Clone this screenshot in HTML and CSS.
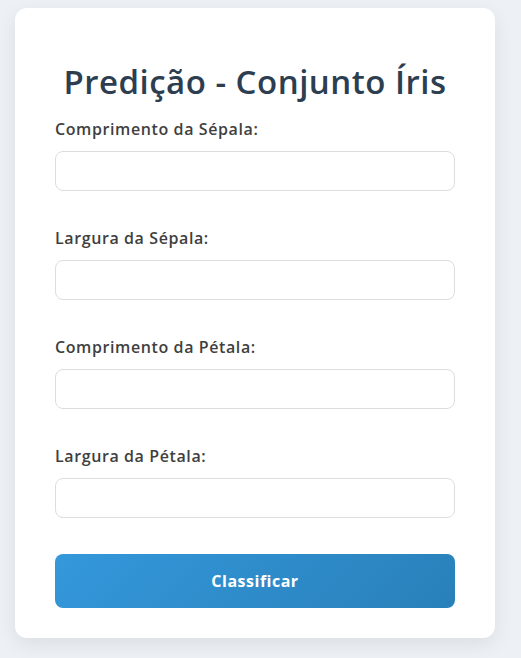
FILE: index.html
```html
<!DOCTYPE html>
<html lang="pt">
<head>
<meta charset="utf-8">
<title>Predição - Conjunto Íris</title>
<link rel="stylesheet" href="styles.css">
</head>
<body>
<div class="card">
  <h1 class="title">Predição - Conjunto Íris</h1>
  <form class="form">
    <div class="group">
      <label class="label" for="sl">Comprimento da Sépala:</label>
      <input class="input" id="sl" type="text">
    </div>
    <div class="group">
      <label class="label" for="sw">Largura da Sépala:</label>
      <input class="input" id="sw" type="text">
    </div>
    <div class="group">
      <label class="label" for="pl">Comprimento da Pétala:</label>
      <input class="input" id="pl" type="text">
    </div>
    <div class="group">
      <label class="label" for="pw">Largura da Pétala:</label>
      <input class="input" id="pw" type="text">
    </div>
    <button class="button" type="button">Classificar</button>
  </form>
</div>
</body>
</html>
```
FILE: styles.css
```css
* { box-sizing: border-box; }
html, body { margin: 0; padding: 0; }
body {
  background: #edf0f5;
  font-family: "Open Sans", "Liberation Sans", sans-serif;
  padding: 8px 0 0 15px;
  min-height: 658px;
}
.card {
  width: 480px;
  background: #ffffff;
  border-radius: 12px;
  box-shadow: 0 6px 20px rgba(0, 0, 0, 0.08);
  padding: 30px 40px 30px;
}
.title {
  margin: 24px 0 16px;
  text-align: center;
  font-size: 33px;
  line-height: 40px;
  letter-spacing: 0.5px;
  font-weight: 600;
  color: #2c3e50;
}
.form { display: flex; flex-direction: column; }
.group {
  display: flex;
  flex-direction: column;
  margin-bottom: 36px;
}
.group:last-of-type { margin-bottom: 36px; }
.label {
  font-size: 16px;
  line-height: 22px;
  letter-spacing: 0.6px;
  font-weight: 600;
  color: #3f3f3f;
  margin-bottom: 11px;
}
.input {
  height: 40px;
  border: 1px solid #dddddd;
  border-radius: 8px;
  padding: 0 12px;
  font-size: 15px;
  font-family: inherit;
  background: #fff;
}
.button {
  height: 54px;
  border: none;
  border-radius: 8px;
  background: linear-gradient(135deg, #3498db, #2980b9);
  color: #ffffff;
  font-family: inherit;
  font-size: 16px;
  letter-spacing: 0.5px;
  font-weight: 700;
  cursor: pointer;
}
```
